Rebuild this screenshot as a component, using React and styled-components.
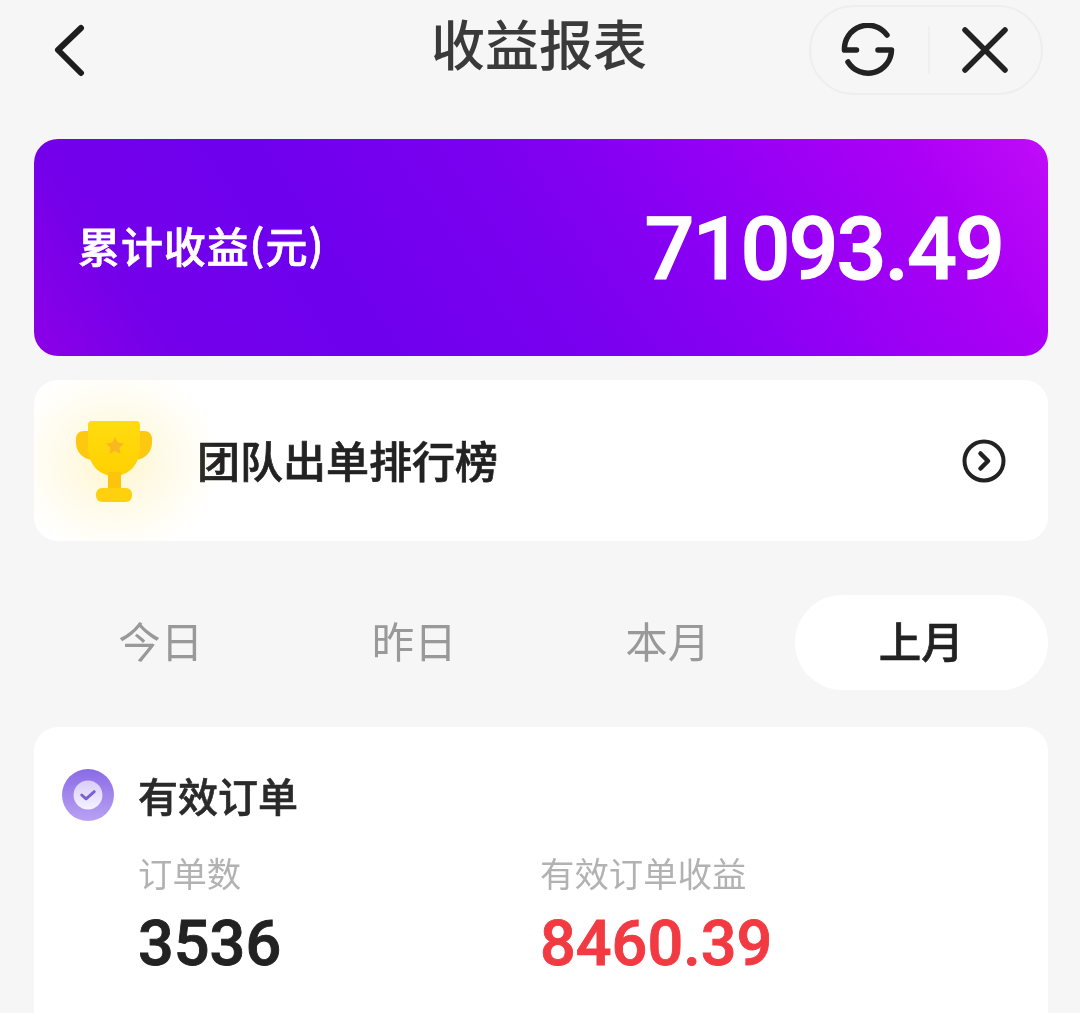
import React from "react";
import styled, { createGlobalStyle } from "styled-components";

const FONT = `"Noto Sans CJK SC", "Noto Sans", sans-serif`;
const NUM = `Roboto, "Noto Sans", sans-serif`;

const Global = createGlobalStyle`
  html, body { margin: 0; padding: 0; background: #f6f6f6; }
  body { height: 1013px; overflow: hidden; font-family: ${FONT}; }
`;

const Page = styled.div`
  box-sizing: border-box;
  width: 1080px;
  height: 1013px;
  overflow: hidden;
  padding: 0 32px 0 34px;
  background: #f6f6f6;
  display: flex;
  flex-direction: column;
  filter: blur(0.6px);
`;

const Header = styled.header`
  height: 139px;
  flex: none;
  display: grid;
  grid-template-columns: 1fr auto 1fr;
  align-items: start;
`;

const BackButton = styled.div`
  display: flex;
  margin: 24px 0 0 20px;
  color: #1d1d1d;
`;

const Title = styled.h1`
  margin: 5px 4px 0 0;
  font-size: 54px;
  line-height: 76px;
  font-weight: 500;
  color: #3a3a3a;
`;

const Capsule = styled.div`
  justify-self: end;
  box-sizing: border-box;
  width: 234px;
  height: 90px;
  margin: 5px 5px 0 0;
  border: 2px solid #eeeeee;
  border-radius: 45px;
  display: flex;
  align-items: center;
  justify-content: space-between;
  padding: 0 33px 0 30px;
  color: #222;
`;

const CapsuleDivider = styled.span`
  width: 2px;
  height: 48px;
  background: #efefef;
`;

const Hero = styled.section`
  flex: none;
  height: 217px;
  box-sizing: border-box;
  border-radius: 24px;
  padding: 0 45px 0 44px;
  display: flex;
  align-items: center;
  justify-content: space-between;
  color: #fff;
  background: linear-gradient(56deg, #8c00e6 0%, #7400ea 12%, #6e00ee 30%, #7a00f0 50%, #8800f4 63%, #ac00f6 88%, #c00cf8 100%);
`;

const HeroLabel = styled.span`
  font-size: 42px;
  font-weight: 500;
  letter-spacing: 0.9px;
  -webkit-text-stroke: 0.7px #fff;
  margin-top: -7px;
`;

const HeroParen = styled.span`
  display: inline-block;
  transform: translateY(-2px);
`;

const HeroValue = styled.span`
  font-family: ${NUM};
  font-size: 88px;
  line-height: 1;
  font-weight: 500;
  letter-spacing: -2px;
  -webkit-text-stroke: 1.2px #fff;
  margin-top: 2px;
`;

const RankCard = styled.section`
  flex: none;
  height: 161px;
  margin-top: 24px;
  box-sizing: border-box;
  border-radius: 24px;
  background: #fff;
  padding: 0 42px 0 36px;
  display: flex;
  align-items: center;
  overflow: hidden;
`;

const TrophyWrap = styled.div`
  position: relative;
  width: 90px;
  height: 90px;
  margin-right: 37px;
  flex: none;
  &::before {
    content: "";
    position: absolute;
    inset: -50px -60px -50px -60px;
    background: radial-gradient(closest-side, rgba(255, 222, 90, 0.3) 0%, rgba(255, 230, 130, 0.17) 50%, rgba(255, 240, 180, 0) 100%);
  }
  svg { position: relative; display: block; }
`;

const RankTitle = styled.span`
  flex: 1;
  font-size: 43px;
  line-height: 60px;
  margin-top: -4px;
  font-weight: 500;
  -webkit-text-stroke: 0.7px #222;
  color: #222;
`;

const RankArrow = styled.div`
  display: flex;
  color: #222;
`;

const Tabs = styled.nav`
  flex: none;
  height: 95px;
  margin-top: 54px;
  display: grid;
  grid-template-columns: repeat(4, 1fr);
`;

const Tab = styled.div`
  display: flex;
  align-items: center;
  justify-content: center;
  border-radius: 48px;
  font-size: 42.500px;
  padding-bottom: 6px;
  font-weight: ${(p) => (p.$active ? 500 : 400)};
  -webkit-text-stroke: ${(p) => (p.$active ? "0.7px #222" : "0")};
  color: ${(p) => (p.$active ? "#222" : "#999")};
  background: ${(p) => (p.$active ? "#fff" : "transparent")};
`;

const StatCard = styled.section`
  flex: none;
  height: 340px;
  margin-top: 37px;
  box-sizing: border-box;
  border-radius: 24px;
  background: #fff;
  padding: 41px 28px;
`;

const StatHead = styled.div`
  display: flex;
  align-items: center;
  gap: 24px;
  height: 54px;
`;

const StatTitle = styled.span`
  font-size: 40px;
  line-height: 54px;
  font-weight: 500;
  -webkit-text-stroke: 0.6px #2a2a2a;
  color: #2a2a2a;
`;

const StatGrid = styled.div`
  display: grid;
  grid-template-columns: 402px 1fr;
  padding-left: 76px;
  margin-top: 25px;
`;

const StatLabel = styled.div`
  font-size: 34.400px;
  line-height: 50px;
  color: #b2b2b2;
`;

const StatValue = styled.div`
  font-family: ${NUM};
  font-size: 63px;
  line-height: 84px;
  margin-top: 5px;
  font-weight: 500;
  -webkit-text-stroke: 0.9px ${(p) => p.$color};
  color: ${(p) => p.$color};
`;

const Trophy = () => (
  <svg width="90" height="90" viewBox="0 0 90 90">
    <defs>
      <linearGradient id="cup" x1="0" y1="0" x2="0" y2="1">
        <stop offset="0" stopColor="#ffdc10" />
        <stop offset="1" stopColor="#ffd000" />
      </linearGradient>
    </defs>
    <path d="M14 15h8v29c-9-1-16-8-16-17v-4c0-5 3-8 8-8zM74 15h-8v29c9-1 16-8 16-17v-4c0-5-3-8-8-8z" fill="#fcc810" />
    <path d="M22 5h44c3 0 4 1 4 4v22c0 17-11 29-26 29S18 48 18 31V9c0-3 1-4 4-4z" fill="url(#cup)" />
    <path d="M38 56h13v18H38z" fill="#fcc40a" />
    <rect x="26" y="72" width="36" height="14" rx="6" fill="#ffd00d" />
    <path d="M45 21l2.800 5.600 6.200.8-4.500 4.300 1.100 6.200-5.600-3-5.600 3 1.100-6.200-4.500-4.300 6.200-.8z" fill="#f9b820" />
  </svg>
);

const CheckBadge = () => (
  <svg width="52" height="52" viewBox="0 0 54 54">
    <defs>
      <linearGradient id="ring" x1="0" y1="0" x2="0" y2="1">
        <stop offset="0" stopColor="#8a6be6" />
        <stop offset="1" stopColor="#b8a2f2" />
      </linearGradient>
      <linearGradient id="inner" x1="0" y1="0" x2="0" y2="1">
        <stop offset="0" stopColor="#d9cdf8" />
        <stop offset="1" stopColor="#f6f2fe" />
      </linearGradient>
    </defs>
    <circle cx="27" cy="27" r="27" fill="url(#ring)" />
    <circle cx="27" cy="27" r="15" fill="url(#inner)" />
    <path d="M20.500 27l4.500 4 8.500-7.500" fill="none" stroke="#7a5fd0" strokeWidth="3" strokeLinecap="round" strokeLinejoin="round" />
  </svg>
);

export default function App() {
  return (
    <Page>
      <Global />
      <Header>
        <BackButton>
          <svg width="34" height="56" viewBox="0 0 34 56" fill="none" stroke="currentColor" strokeWidth="6" strokeLinecap="round" strokeLinejoin="round">
            <path d="M27 4L4 26l23 23" />
          </svg>
        </BackButton>
        <Title>收益报表</Title>
        <Capsule>
          <svg width="54" height="54" viewBox="0 0 54 54" fill="none" stroke="currentColor" strokeWidth="5.500" strokeLinecap="round" strokeLinejoin="round">
            <path d="M46 12A23.500 23.500 0 0 0 3.500 27h12" />
            <path d="M7 39A23.500 23.500 0 0 0 50.500 27H37" />
          </svg>
          <CapsuleDivider />
          <svg width="46" height="46" viewBox="0 0 46 46" fill="none" stroke="currentColor" strokeWidth="5.500" strokeLinecap="round">
            <path d="M3 3l40 40M43 3L3 43" />
          </svg>
        </Capsule>
      </Header>

      <Hero>
        <HeroLabel>累计收益<HeroParen>(</HeroParen>元<HeroParen>)</HeroParen></HeroLabel>
        <HeroValue>71093.49</HeroValue>
      </Hero>

      <RankCard>
        <TrophyWrap><Trophy /></TrophyWrap>
        <RankTitle>团队出单排行榜</RankTitle>
        <RankArrow>
          <svg width="44" height="44" viewBox="0 0 44 44" fill="none" stroke="currentColor" strokeLinecap="round" strokeLinejoin="round">
            <circle cx="22" cy="22" r="19.500" strokeWidth="4" />
            <path d="M18.500 14.500l7.500 7.500-7.500 7.500" strokeWidth="4.500" />
          </svg>
        </RankArrow>
      </RankCard>

      <Tabs>
        <Tab>今日</Tab>
        <Tab>昨日</Tab>
        <Tab>本月</Tab>
        <Tab $active>上月</Tab>
      </Tabs>

      <StatCard>
        <StatHead>
          <CheckBadge />
          <StatTitle>有效订单</StatTitle>
        </StatHead>
        <StatGrid>
          <div>
            <StatLabel>订单数</StatLabel>
            <StatValue $color="#222">3536</StatValue>
          </div>
          <div>
            <StatLabel>有效订单收益</StatLabel>
            <StatValue $color="#f23a42">8460.39</StatValue>
          </div>
        </StatGrid>
      </StatCard>
    </Page>
  );
}
